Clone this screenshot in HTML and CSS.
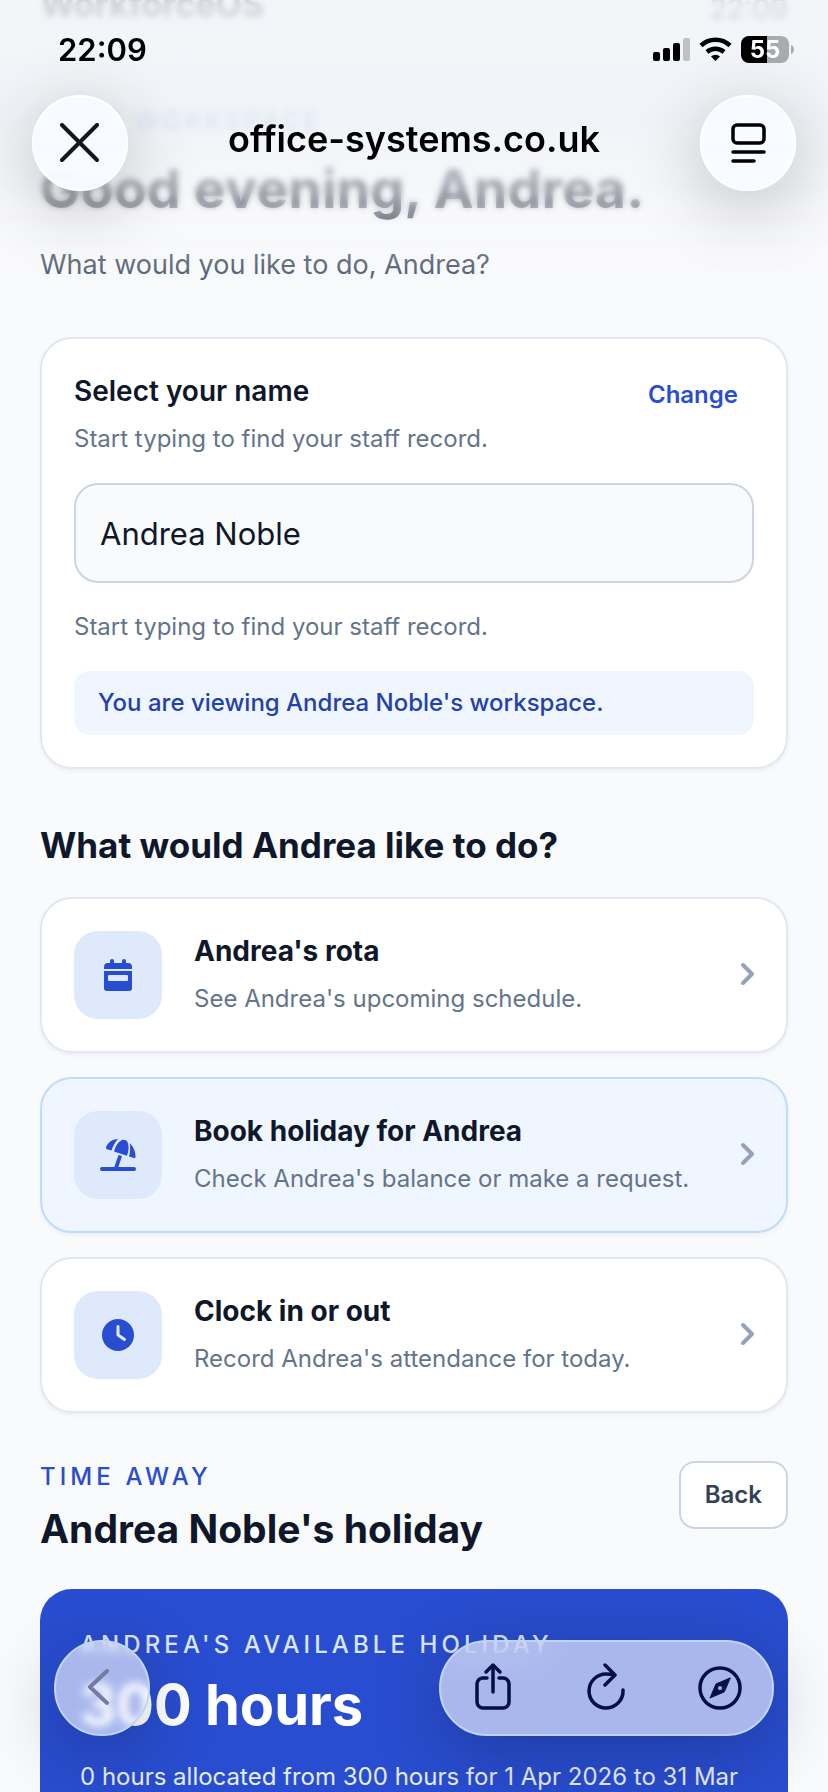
FILE: index.html
```
<!DOCTYPE html>
<html lang="en">
<head>
    <meta charset="UTF-8">
    <meta name="viewport" content="width=device-width, initial-scale=1.0">
    <title>WorkforceOS</title>
    <link rel="stylesheet" href="styles.css">
</head>
<body>

    <div class="page">
        <div class="app-bar">
            <span class="brand">WorkforceOS</span>
            <span class="clock">22:09</span>
        </div>

        <main>
            <header class="greeting">
                <p class="eyebrow">Your workspace</p>
                <h1>Good evening, Andrea.</h1>
                <p class="lead">What would you like to do, Andrea?</p>
            </header>

            <section class="card staff">
                <div class="staff-head">
                    <div>
                        <label class="card-title" for="staffName">Select your name</label>
                        <p class="muted">Start typing to find your staff record.</p>
                    </div>
                    <button type="button" class="link-button">Change</button>
                </div>
                <input type="text" id="staffName" name="staffName" value="Andrea Noble">
                <p class="muted">Start typing to find your staff record.</p>
                <p class="notice">You are viewing Andrea Noble's workspace.</p>
            </section>

            <section class="actions">
                <h2>What would Andrea like to do?</h2>

                <a class="card action" href="#rota">
                    <span class="tile">
                        <svg width="44" height="44" viewBox="0 0 44 44">
                            <path fill="currentColor" d="M8 16v-2a4 4 0 0 1 4-4h2V8a2 2 0 0 1 4 0v2h8V8a2 2 0 0 1 4 0v2h2a4 4 0 0 1 4 4v2z"/>
                            <path fill="currentColor" fill-rule="evenodd" d="M8 18h28v17a3 3 0 0 1-3 3H11a3 3 0 0 1-3-3zM13 22a1 1 0 0 0-1 1v4a1 1 0 0 0 1 1h18a1 1 0 0 0 1-1v-4a1 1 0 0 0-1-1z"/>
                        </svg>
                    </span>
                    <span class="action-text">
                        <strong class="card-title">Andrea's rota</strong>
                        <span class="muted">See Andrea's upcoming schedule.</span>
                    </span>
                    <svg class="chevron" width="14" height="22" viewBox="0 0 14 22"><path d="M3 1l9 9-9 9"/></svg>
                </a>

                <a class="card action active" href="#holiday">
                    <span class="tile">
                        <svg width="44" height="44" viewBox="0 0 44 44">
                            <g fill="currentColor">
                                <path d="M22 6C16 6.500 11.500 9.500 10 14.500c-.2.800.2 1.500 1 1.800l4.500 1.200C17 13 19 9 22 6z"/>
                                <path d="M18 18.500c1.500-5.500 4.500-10 8-11.500 2-.6 4.500.3 5.500 2 1.700 3.500 1.300 8.500-.5 13.800z"/>
                                <path d="M33.500 10c4 3.500 6.200 9 6 14 0 .9-.8 1.300-1.600 1.100L33 23.500c1.400-4.700 1.600-9.500.5-13.500z"/>
                                <path d="M22.500 22l3.500 1.100L22.200 34.500h-4z"/>
                                <rect x="4" y="34" width="36" height="4" rx="2"/>
                            </g>
                        </svg>
                    </span>
                    <span class="action-text">
                        <strong class="card-title">Book holiday for Andrea</strong>
                        <span class="muted">Check Andrea's balance or make a request.</span>
                    </span>
                    <svg class="chevron" width="14" height="22" viewBox="0 0 14 22"><path d="M3 1l9 9-9 9"/></svg>
                </a>

                <a class="card action" href="#clock">
                    <span class="tile">
                        <svg width="44" height="44" viewBox="0 0 44 44">
                            <circle cx="22" cy="22" r="16" fill="currentColor"/>
                            <path d="M22 13.500V22l6.500 4.500" fill="none" stroke="#dfe9fc" stroke-width="3" stroke-linecap="round" stroke-linejoin="round"/>
                        </svg>
                    </span>
                    <span class="action-text">
                        <strong class="card-title">Clock in or out</strong>
                        <span class="muted">Record Andrea's attendance for today.</span>
                    </span>
                    <svg class="chevron" width="14" height="22" viewBox="0 0 14 22"><path d="M3 1l9 9-9 9"/></svg>
                </a>
            </section>

            <section class="holiday">
                <div class="holiday-head">
                    <div>
                        <p class="eyebrow">Time away</p>
                        <h2 class="holiday-title">Andrea Noble's holiday</h2>
                    </div>
                    <button type="button" class="back-button">Back</button>
                </div>
                <div class="balance">
                    <p class="eyebrow">Andrea's available holiday</p>
                    <p class="hours">300 hours</p>
                    <p class="allocated">0 hours allocated from 300 hours for 1 Apr 2026 to 31 Mar</p>
                </div>
            </section>
        </main>
    </div>

    <!-- browser chrome over the page -->
    <div class="top-chrome">
        <div class="status-bar">
            <span>22:09</span>
            <svg width="142" height="28" viewBox="0 0 142 28">
                <rect x="0" y="16" width="7" height="9" rx="2"/>
                <rect x="10" y="12" width="7" height="13" rx="2"/>
                <rect x="20" y="7" width="7" height="18" rx="2"/>
                <rect x="30" y="2" width="7" height="23" rx="2" fill="#bfc1c5"/>
                <g fill="none" stroke="#000" stroke-width="4.500">
                    <path d="M48 9.500a21 21 0 0 1 29 0"/>
                    <path d="M54 16a13 13 0 0 1 17 0"/>
                </g>
                <path d="M62.500 25l-4.500-4.500a6.500 6.500 0 0 1 9 0z"/>
                <path fill="#aaabae" d="M114 0h14a8 8 0 0 1 8 8v11a8 8 0 0 1-8 8h-14z"/>
                <path d="M114 0H96a8 8 0 0 0-8 8v11a8 8 0 0 0 8 8h18z"/>
                <path fill="#aaabae" d="M138 9c4 1 4 8 0 9z"/>
                <text class="battery-level" x="112" y="22" text-anchor="middle">55</text>
            </svg>
        </div>
        <div class="nav-bar">
            <button type="button" class="round" aria-label="Close">
                <svg width="40" height="40" viewBox="0 0 40 40" fill="none" stroke="#14161f" stroke-width="4" stroke-linecap="round"><path d="M2 2l35 35M37 2L2 37"/></svg>
            </button>
            <span class="site">office-systems.co.uk</span>
            <button type="button" class="round" aria-label="Page menu">
                <svg width="36" height="40" viewBox="0 0 36 40" fill="none" stroke="#000" stroke-width="3.500" stroke-linecap="round"><rect x="3" y="2" width="31" height="18" rx="4"/><path d="M3 29h31M3 38h21"/></svg>
            </button>
        </div>
    </div>

    <div class="bottom-chrome">
        <button type="button" class="round glass" aria-label="Go back">
            <svg width="30" height="38" viewBox="0 0 30 38" fill="none" stroke="#727ba0" stroke-width="4" stroke-linecap="round" stroke-linejoin="round"><path d="M20 2L3 18l17 16"/></svg>
        </button>
        <div class="toolbar">
            <button type="button" aria-label="Share">
                <svg width="44" height="48" viewBox="0 0 44 48"><path d="M16 16h-4a6 6 0 0 0-6 6v18a6 6 0 0 0 6 6h20a6 6 0 0 0 6-6V22a6 6 0 0 0-6-6h-4M22 30V4M15 10l7-7 7 7"/></svg>
            </button>
            <button type="button" aria-label="Reload">
                <svg width="44" height="48" viewBox="0 0 44 48"><path d="M38 28a17 17 0 1 1-17-16q5 0 9 1M20 3l10 10-10 10"/></svg>
            </button>
            <button type="button" aria-label="Open in Safari">
                <svg width="44" height="48" viewBox="0 0 44 48"><circle cx="22" cy="26" r="20"/><path class="needle" fill-rule="evenodd" d="M32 16L18 22 12 36 26 30zM22 23.500a2.500 2.500 0 1 0 0 5 2.500 2.500 0 0 0 0-5z"/></svg>
            </button>
        </div>
    </div>

</body>
</html>
```
FILE: styles.css
```
* {
    box-sizing: border-box;
    margin: 0;
}

body {
    font-family: Inter, 'Liberation Sans', sans-serif;
    font-size: 24px;
    line-height: 40px;
    color: #0f172a;
    background-color: #f9fafc;
}

button {
    font: inherit;
    border: none;
    background: none;
    cursor: pointer;
}

a {
    color: inherit;
    text-decoration: none;
}

svg {
    display: block;
}

.page {
    height: 100vh;
    overflow: hidden; /* the page is scrolled inside the browser view */
}

/* bottom edge of the app header, the rest is scrolled away */
.app-bar {
    height: 25px;
    padding: 0 40px;
    overflow: hidden;
    display: flex;
    justify-content: space-between;
    align-items: flex-end;
    white-space: nowrap;
}

.brand {
    font-size: 34px;
    font-weight: 700;
}

.clock {
    font-size: 28px;
    font-weight: 500;
    line-height: 32px;
    color: #475569;
}

main {
    padding: 80px 40px 0;
}

.eyebrow {
    font-weight: 500;
    line-height: 32px;
    letter-spacing: 0.17em;
    text-transform: uppercase;
    color: #294dd0;
}

h1 {
    margin-top: 16px;
    font-size: 54px;
    font-weight: 700;
    line-height: 72px;
    white-space: nowrap;
}

.lead {
    margin-top: 16px;
    font-size: 27px;
    line-height: 48px;
    color: #475569;
}

.card {
    background-color: white;
    border: 2px solid #e2e8f0;
    border-radius: 32px;
    padding: 32px;
    box-shadow: 0 2px 4px rgba(15, 23, 42, 0.05);
}

.staff {
    margin-top: 48px;
}

.staff-head {
    display: flex;
    justify-content: space-between;
    align-items: flex-start;
}

.card-title {
    display: block;
    font-size: 28px;
    font-weight: 600;
}

.muted {
    display: block;
    color: #64748b;
}

.staff-head .muted, .action .muted {
    margin-top: 8px;
}

.link-button {
    padding: 0 16px;
    line-height: 48px;
    font-weight: 600;
    color: #294dd0;
}

input[type="text"] {
    display: block;
    width: 100%;
    height: 100px;
    margin: 24px 0;
    padding: 0 24px;
    font: inherit;
    font-size: 31px;
    color: inherit;
    background-color: #f9fafc;
    border: 2px solid #cbd5e1;
    border-radius: 24px;
}

.notice {
    margin-top: 24px;
    padding: 16px 24px;
    line-height: 32px;
    font-weight: 500;
    color: #2340ac;
    background-color: #eff6ff;
    border-radius: 16px;
}

h2 {
    font-size: 35px;
    font-weight: 700;
    line-height: 56px;
}

.actions {
    margin-top: 48px;
    display: flex;
    flex-direction: column;
    gap: 24px;
}

.action {
    display: flex;
    align-items: center;
    gap: 32px;
}

.action .card-title {
    font-weight: 700;
}

.active {
    background-color: #eff6ff;
    border-color: #bfdbfe;
}

.tile {
    width: 88px;
    height: 88px;
    display: grid;
    place-items: center;
    color: #294dd0;
    background-color: #dfe9fc;
    border-radius: 24px;
}

.action-text {
    flex: 1;
}

.chevron {
    fill: none;
    stroke: #94a3b8;
    stroke-width: 4;
    stroke-linecap: round;
    stroke-linejoin: round;
    overflow: visible;
}

.holiday {
    margin-top: 48px;
}

.holiday-head {
    display: flex;
    justify-content: space-between;
    align-items: flex-start;
}

.holiday-title {
    margin-top: 8px;
    font-size: 39px;
}

.back-button {
    height: 68px;
    padding: 0 24px;
    font-weight: 600;
    color: #334155;
    background-color: white;
    border: 2px solid #cbd5e1;
    border-radius: 16px;
}

.balance {
    margin-top: 32px;
    padding: 40px;
    color: white;
    background-color: #294dd0;
    border-radius: 32px;
}

.balance .eyebrow {
    color: #dbe6fc;
}

.hours {
    margin-top: 8px;
    font-size: 56px;
    font-weight: 700;
    line-height: 72px;
}

.allocated {
    margin-top: 16px;
    color: #e6eefd;
}

.top-chrome {
    position: fixed;
    top: 0;
    left: 0;
    right: 0;
    height: 290px;
    padding-top: 32px;
}

/* blur and tint that fade out down the page */
.top-chrome::before, .top-chrome::after {
    content: "";
    position: absolute;
    inset: 0;
    z-index: -1;
}

.top-chrome::before {
    backdrop-filter: blur(3px);
    mask-image: linear-gradient(black 190px, transparent 225px);
}

.top-chrome::after {
    background: linear-gradient(rgba(241, 244, 248, 0.84), rgba(239, 243, 247, 0.91) 120px, rgba(242, 244, 248, 0.72) 170px, rgba(246, 247, 250, 0.5) 210px, rgba(249, 250, 252, 0) 290px);
}

.status-bar {
    height: 36px;
    padding: 0 33px 0 58px;
    display: flex;
    justify-content: space-between;
    align-items: center;
    font-size: 31px;
    font-weight: 600;
    color: black;
}

.battery-level {
    font-size: 24px;
    font-weight: 700;
    fill: white;
}

.nav-bar {
    margin-top: 27px;
    padding: 0 32px;
    display: flex;
    justify-content: space-between;
    align-items: center;
}

.site {
    padding-bottom: 8px;
    font-size: 36px;
    font-weight: 600;
    color: black;
}

.round {
    width: 96px;
    height: 96px;
    padding: 0;
    display: grid;
    place-items: center;
    background-color: rgba(248, 251, 255, 0.97);
    border: 2px solid white;
    border-radius: 50%;
    box-shadow: 0 16px 72px rgba(0, 0, 0, 0.24);
}

.bottom-chrome {
    position: fixed;
    left: 54px;
    right: 54px;
    bottom: 56px;
    display: flex;
    justify-content: space-between;
}

.glass, .toolbar {
    background-color: rgba(255, 255, 255, 0.6);
    border: 2px solid #bfd5f6;
    box-shadow: 0 16px 72px rgba(0, 0, 0, 0.24);
}

.glass {
    backdrop-filter: blur(4px);
}

.toolbar {
    width: 335px;
    height: 96px;
    padding: 0 30px;
    display: flex;
    justify-content: space-between;
    align-items: center;
    border-radius: 48px;
    backdrop-filter: blur(16px);
}

.toolbar button {
    padding: 0 0 4px;
}

.toolbar svg {
    fill: none;
    stroke: #020f48;
    stroke-width: 3.5;
    stroke-linecap: round;
    stroke-linejoin: round;
}

.toolbar .needle {
    fill: #020f48;
    stroke-width: 1;
}
```
